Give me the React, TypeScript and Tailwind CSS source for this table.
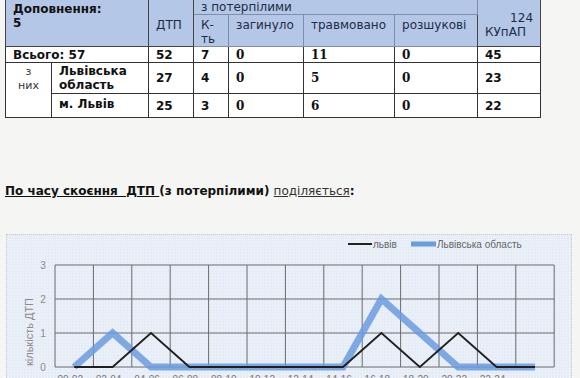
import React from 'react';

const LVIV = [0, 0, 1, 0, 0, 0, 0, 0, 1, 0, 1, 0, 0];
const REGION = [0, 1, 0, 0, 0, 0, 0, 0, 2, 1, 0, 0, 0];
const LABELS = ['00-02', '02-04', '04-06', '06-08', '08-10', '10-12', '12-14', '14-16', '16-18', '18-20', '20-22', '22-24'];

const PL = 48;
const PT = 30;
const STEP_X = 38.4;
const STEP_Y = 34;
const px = (i: number) => PL + STEP_X * (i + 0.5);
const py = (v: number) => PT + (3 - v) * STEP_Y;
const pts = (d: number[]) => d.map((v, i) => `${px(i)},${py(v)}`).join(' ');

const Chart: React.FC = () => (
  <svg width="566" height="200" className="block">
    {/* legend */}
    <line x1="341" y1="9" x2="365" y2="9" stroke="#222" strokeWidth="2" />
    <text x="366" y="12.5" fontSize="10" fill="#666" fontFamily="Liberation Sans, sans-serif">львів</text>
    <line x1="404" y1="9" x2="429" y2="9" stroke="#6b9be0" strokeWidth="5" />
    <text x="430" y="12.5" fontSize="10" fill="#666" fontFamily="Liberation Sans, sans-serif">Львівська область</text>

    {/* grid */}
    {[0, 1, 2, 3].map((v) => (
      <line key={v} x1={PL} x2={PL + STEP_X * 13} y1={py(v)} y2={py(v)} stroke="#6a6a6a" strokeWidth="1" />
    ))}
    {Array.from({ length: 14 }).map((_, i) => (
      <line key={i} x1={PL + STEP_X * i} x2={PL + STEP_X * i} y1={PT} y2={py(0)} stroke="#6a6a6a" strokeWidth="1" />
    ))}
    {[0, 1, 2, 3].map((v) => (
      <text key={v} x="36" y={py(v) + 4} fontSize="10" fill="#8a8a8a" textAnchor="middle" fontFamily="Liberation Sans, sans-serif">{v}</text>
    ))}
    <text
      x="0"
      y="0"
      transform="translate(26 97) rotate(-90)"
      fontSize="11"
      fill="#8a8a8a"
      textAnchor="middle"
      fontFamily="Liberation Sans, sans-serif"
    >
      кількість ДТП
    </text>

    {/* series */}
    <polyline points={pts(REGION)} fill="none" stroke="#6b9be0" strokeOpacity="0.85" strokeWidth="7" />
    <polyline points={pts(LVIV)} fill="none" stroke="#1f1f1f" strokeWidth="1.8" />

    {LABELS.map((l, i) => (
      <text key={l} x={px(i) - 4} y="148" fontSize="10" fill="#777" textAnchor="middle" fontFamily="Liberation Sans, sans-serif">{l}</text>
    ))}
  </svg>
);

const thBase = 'border bg-[#b4c7e7] text-left px-[7px]';
const thSub = `${thBase} border-[#7f8eab] font-normal text-[#1d2b45] align-top pt-[3px]`;
const td = 'border border-[#333] bg-white font-bold px-[7px]';
const tdSerif = 'border border-[#333] bg-white font-bold px-[7px] font-["DejaVu_Serif",serif]';

const App: React.FC = () => {
  return (
    <div className="min-h-screen bg-[#f5f5f4] font-['DejaVu_Sans',sans-serif] text-[12px] leading-[14px] text-[#111] overflow-hidden">
      <div className="pl-[5px]">
        <table className="table-fixed border-collapse w-[535px] -mt-[2px]">
          <colgroup>
            <col className="w-[46px]" />
            <col className="w-[97px]" />
            <col className="w-[45px]" />
            <col className="w-[35px]" />
            <col className="w-[75px]" />
            <col className="w-[91px]" />
            <col className="w-[83px]" />
            <col className="w-[63px]" />
          </colgroup>
          <thead>
            <tr className="h-[16px]">
              <th colSpan={2} rowSpan={2} className={`${thBase} border-[#444] font-bold text-[#111] align-top pt-[3px]`}>
                Доповнення:
                <br />5
              </th>
              <th rowSpan={2} className={`${thBase} border-[#444] font-normal text-[#1d2b45] align-middle pt-[4px]`}>ДТП</th>
              <th colSpan={4} className={`${thBase} border-[#7f8eab] font-normal text-[#1d2b45] align-middle`}>з потерпілими</th>
              <th rowSpan={2} className={`${thBase} border-[#444] font-normal text-[#1d2b45] align-middle pt-[4px]`}>
                <div className="text-right">124</div>
                <div>КУпАП</div>
              </th>
            </tr>
            <tr className="h-[32px]">
              <th className={thSub}>К-ть</th>
              <th className={thSub}>загинуло</th>
              <th className={thSub}>травмовано</th>
              <th className={thSub}>розшукові</th>
            </tr>
          </thead>
          <tbody>
            <tr className="h-[16px]">
              <td colSpan={2} className={td}>Всього: 57</td>
              <td className={td}>52</td>
              <td className={td}>7</td>
              <td className={tdSerif}>0</td>
              <td className={tdSerif}>11</td>
              <td className={tdSerif}>0</td>
              <td className={td}>45</td>
            </tr>
            <tr className="h-[31px]">
              <td rowSpan={2} className="border border-[#333] bg-white text-center align-top text-[11px] leading-[14px] text-[#333] pt-[2px]">
                з<br />них
              </td>
              <td className={td}>Львівська область</td>
              <td className={td}>27</td>
              <td className={td}>4</td>
              <td className={tdSerif}>0</td>
              <td className={tdSerif}>5</td>
              <td className={tdSerif}>0</td>
              <td className={td}>23</td>
            </tr>
            <tr className="h-[24px]">
              <td className={`${td} align-top pt-[3px]`}>м. Львів</td>
              <td className={td}>25</td>
              <td className={td}>3</td>
              <td className={tdSerif}>0</td>
              <td className={tdSerif}>6</td>
              <td className={tdSerif}>0</td>
              <td className={td}>22</td>
            </tr>
          </tbody>
        </table>
      </div>

      <p className="mt-[66px] ml-[5px] font-bold text-[12px]">
        <span className="underline">По часу скоєння&nbsp; ДТП </span>(з потерпілими){' '}
        <span className="underline font-normal text-[#333]">поділяється</span>:
      </p>

      <div className="mt-[36px] ml-[6px] w-[566px] border border-dotted border-[#c9c9c9] bg-[#e7edf7] bg-[radial-gradient(circle,#f4f7fc_0.7px,transparent_0.9px)] bg-[length:3px_3px]">
        <Chart />
      </div>
    </div>
  );
};

export default App;
